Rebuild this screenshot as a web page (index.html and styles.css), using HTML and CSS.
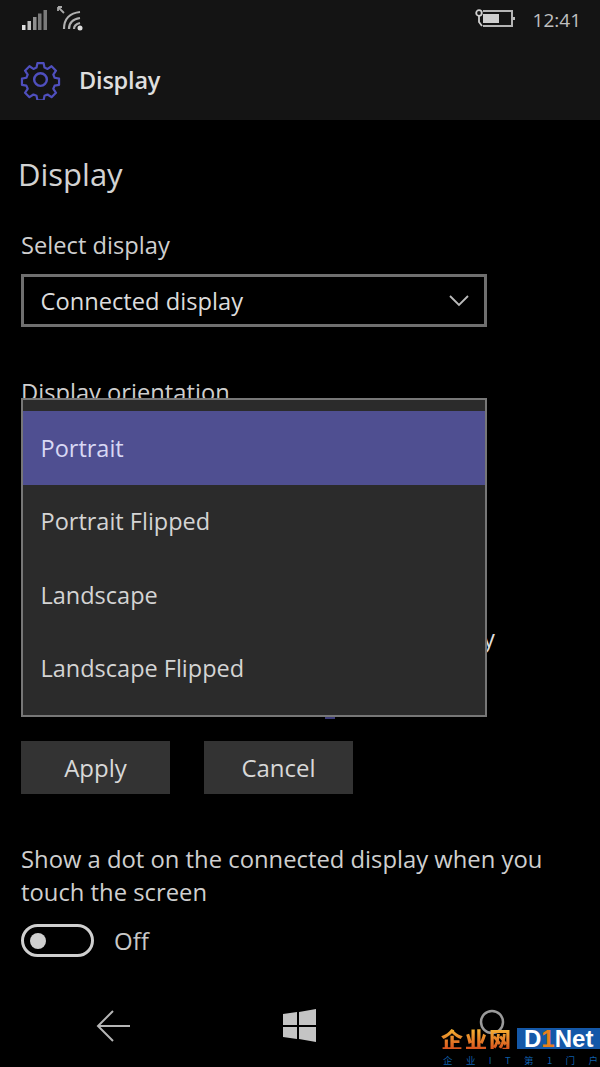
FILE: index.html
```html
<!DOCTYPE html>
<html lang="en">
<head>
<meta charset="utf-8">
<title>Display</title>
<link rel="stylesheet" href="styles.css">
</head>
<body>
<div class="phone">
  <header class="top">
    <div class="status">
      <div class="status-left">
        <svg class="signal" width="26" height="22" viewBox="0 0 26 22"><path fill="#e0e0e0" d="M0 15h3.500v5H0z"/><path fill="#c0c0c0" d="M5.500 11h3.500v9H5.500z"/><path fill="#909090" d="M11 7h3.500v13H11z"/><path fill="#7a7a7a" d="M16 3.500h3.500V20H16zM21.500 0H25v20h-3.500z"/></svg>
        <svg class="wifi" width="28" height="26" viewBox="0 0 28 26" fill="none"><path stroke="#a8a8a8" stroke-width="1.800" d="M1 2l6 6M1 2h4M1 2v4"/><path stroke="#b0b0b0" stroke-width="2.200" d="M7 24C7 14 13 8 23 7M12 24c0-6 4-10 11-11M17 24c0-3 2-5 6-6"/><circle cx="23" cy="23" r="2.500" fill="#ddd"/></svg>
      </div>
      <div class="status-right">
        <svg class="battery" width="40" height="22" viewBox="0 0 40 22" fill="none"><circle cx="4" cy="6" r="2.800" stroke="#cfcfcf" stroke-width="1.800"/><path stroke="#cfcfcf" stroke-width="1.800" d="M4 9v6l3 4"/><path stroke="#b5b5b5" stroke-width="2" d="M8 4h29v15H8"/><path fill="#cfcfcf" d="M8 7h16v9H8z"/><path fill="#bdbdbd" d="M38 10h2v3h-2z"/></svg>
        <span class="clock">12:41</span>
      </div>
    </div>
    <div class="titlebar">
      <svg class="gear" width="41" height="41" viewBox="0 0 42 42" fill="none" stroke="#4f4fbe" stroke-width="2.500"><path stroke-linejoin="round" d="M17.500 2.500h7l1 5 3.500 1.500 4.500-3 5 5-3 4.500 1.500 3.500 5 1v7l-5 1-1.500 3.500 3 4.500-5 5-4.500-3-3.500 1.500-1 5h-7l-1-5-3.500-1.500-4.500 3-5-5 3-4.500-1.500-3.500-5-1v-7l5-1 1.500-3.500-3-4.500 5-5 4.500 3 3.500-1.500z" transform="translate(2 2) scale(.905)"/><circle cx="21" cy="21" r="6.500"/></svg>
      <span class="app-name">Display</span>
    </div>
  </header>
  <main class="content">
    <h1 class="page-title">Display</h1>
    <div class="label">Select display</div>
    <div class="combo">
      <span>Connected display</span>
      <svg width="20" height="12" viewBox="0 0 20 12" fill="none"><path stroke="#bbb" stroke-width="1.800" d="M1 1l9 9 9-9"/></svg>
    </div>
    <div class="label label-orientation">Display orientation</div>
    <div class="behind"><span>y</span></div>
    <div class="buttons">
      <button class="btn">Apply</button>
      <button class="btn">Cancel</button>
    </div>
    <p class="desc">Show a dot on the connected display when you touch the screen</p>
    <div class="toggle-row">
      <span class="toggle"><span class="knob"></span></span>
      <span class="toggle-text">Off</span>
    </div>
  </main>
  <nav class="navbar">
    <svg class="nav-back" width="36" height="32" viewBox="0 0 36 32" fill="none"><path stroke="#b5b5b5" stroke-width="2" d="M34 16H2M17 1L2 16l15 15"/></svg>
    <svg class="nav-win" width="33" height="33" viewBox="0 0 33 33"><path fill="#c4c4c4" d="M0 5l14-2v13H0zM16 3l17-3v16H16zM0 18h14v12L0 28zM16 18h17v15l-17-3z"/></svg>
    <svg class="nav-search" width="28" height="36" viewBox="0 0 28 36" fill="none"><circle cx="14" cy="14" r="11" stroke="#9a9a9a" stroke-width="2.500"/></svg>
  </nav>
  <div class="popup">
    <div class="option selected">Portrait</div>
    <div class="option">Portrait Flipped</div>
    <div class="option">Landscape</div>
    <div class="option">Landscape Flipped</div>
  </div>
  <div class="dot-behind"></div>
  <div class="watermark">
    <div class="wm-main"><span class="wm-cn">企业网</span><span class="wm-en">D<b>1</b>Net</span></div>
    <div class="wm-sub"><span>企</span><span>业</span><span>I</span><span>T</span><span>第</span><span>1</span><span>门</span><span>户</span></div>
  </div>
</div>
</body>
</html>
```
FILE: styles.css
```css
* { box-sizing: border-box; }
html, body { margin: 0; padding: 0; background: #000; }
body { font-family: "Open Sans", "Noto Sans", sans-serif; color: #d6d6d6; }
.phone { position: relative; width: 600px; height: 1067px; overflow: hidden; background: #000; }

.top { height: 120px; background: #141414; padding: 0 19px 0 20px; display: flex; flex-direction: column; }
.status { height: 40px; display: flex; justify-content: space-between; align-items: flex-start; }
.status-left { display: flex; gap: 9px; padding-top: 5px; padding-left: 2px; }
.signal { margin-top: 5px; }
.status-right { display: flex; gap: 18px; padding-top: 7px; }
.clock { font-size: 19px; line-height: 26px; color: #c0c0c0; }
.titlebar { display: flex; align-items: center; gap: 18px; height: 80px; padding-bottom: 1px; }
.app-name { font-size: 23.500px; font-weight: 600; color: #dedede; letter-spacing: -.2px; }

.content { padding: 0 21px; }
.page-title { margin: 31px 0 0 -3px; font-size: 31px; line-height: 46px; font-weight: 400; color: #d2d2d2; }
.label { margin-top: 33px; font-size: 23.700px; line-height: 30px; color: #cfcfcf; }
.combo { margin-top: 14px; width: 466px; height: 53px; border: 3px solid #6f6f6f; padding: 0 15px 0 16.500px; display: flex; align-items: center; justify-content: space-between; font-size: 23.700px; color: #dcdcdc; background: #000; }
.label-orientation { margin-top: 50px; }
.behind { height: 334px; padding: 216px 0 0 462px; font-size: 23.700px; color: #ddd; }
.behind span { display: block; line-height: 30px; }
.buttons { display: flex; gap: 34px; }
.btn { width: 149px; height: 53px; border: 0; background: #333; color: #d8d8d8; font: 400 24px "Open Sans", sans-serif; padding: 0; }
.desc { margin: 49px 0 0; width: 540px; font-size: 23.800px; line-height: 33px; color: #cfcfcf; }
.toggle-row { display: flex; align-items: center; gap: 20px; margin-top: 15px; }
.toggle { width: 73px; height: 33px; border: 3px solid #cfcfcf; border-radius: 17px; display: flex; align-items: center; padding-left: 6px; }
.knob { width: 16px; height: 16px; border-radius: 50%; background: #cfcfcf; }
.toggle-text { font-size: 24px; color: #c8c8c8; }

.navbar { position: absolute; left: 0; right: 0; bottom: 0; height: 70px; }
.nav-back, .nav-win, .nav-search { position: absolute; }
.nav-back { left: 96px; top: 13px; }
.nav-win { left: 283px; top: 12px; }
.nav-search { left: 478px; top: 11px; }

.popup { position: absolute; left: 21px; top: 398px; width: 466px; height: 319px; background: #2b2b2b; border: 2px solid #777; padding-top: 11px; }
.option { height: 73.500px; padding-left: 17.500px; display: flex; align-items: center; font-size: 23.500px; color: #d4d4d4; }
.option.selected { background: #4f4f91; color: #d8d8f4; }
.dot-behind { position: absolute; left: 325px; top: 717px; width: 10px; height: 2px; background: #3b3b78; }

.watermark { position: absolute; left: 441px; top: 1028px; width: 159px; }
.wm-main { display: flex; height: 21px; align-items: center; gap: 3px; }
.wm-cn { font: 900 22px/21px "Noto Sans CJK SC", sans-serif; letter-spacing: 2px; width: 73px; white-space: nowrap; background: linear-gradient(#f7b733, #d9541e); -webkit-background-clip: text; background-clip: text; color: transparent; }
.wm-en { flex: 1; height: 21px; background: #1458a8; color: #fff; font: 700 24px/21px "Liberation Sans", sans-serif; padding-left: 7px; white-space: nowrap; }
.wm-en b { color: #e8801a; }
.wm-sub { display: flex; justify-content: space-between; padding: 0 2px; margin-top: 6px; font: 400 9.500px/11px "Noto Sans CJK SC", sans-serif; color: #0f5ea8; }
```
